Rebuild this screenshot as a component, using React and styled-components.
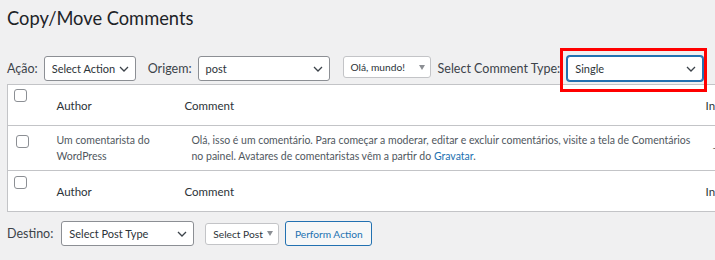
import React from "react";
import styled, { createGlobalStyle, css } from "styled-components";

const GlobalStyle = createGlobalStyle`
  html, body {
    margin: 0;
    padding: 0;
    background: #f0f0f1;
    overflow: hidden;
  }
  body {
    font-family: Lato, "Open Sans", sans-serif;
    color: #3c434a;
  }
`;

const Page = styled.div`
  width: 900px;
  padding: 0 0 20px 7px;
`;

const Title = styled.h1`
  margin: 0;
  padding-top: 5px;
  font-size: 18.3px;
  line-height: 26px;
  font-weight: 400;
  color: #1d2327;
`;

const Toolbar = styled.div`
  display: flex;
  align-items: center;
  height: 25px;
  margin-top: ${(p) => p.$top}px;
`;

const Label = styled.span`
  font-size: 12.5px;
  color: #3c434a;
  margin-left: ${(p) => p.$left || 0}px;
  margin-right: ${(p) => (p.$right === undefined ? 6 : p.$right)}px;
  white-space: nowrap;
`;

const SelectBox = styled.div`
  position: relative;
  box-sizing: border-box;
  display: flex;
  align-items: center;
  justify-content: space-between;
  flex-shrink: 0;
  width: ${(p) => p.$width}px;
  height: 25px;
  margin-left: ${(p) => p.$left || 0}px;
  padding: 0 6px 0 7px;
  background: #fff;
  border: 1px solid #8c8f94;
  border-radius: 3px;
  font-size: 11px;
  color: #2c3338;
  white-space: nowrap;
  ${(p) =>
    p.$focused &&
    css`
      border-color: #2271b1;
      box-shadow: 0 0 0 1px #2271b1;
    `}
`;

const Highlight = styled.div`
  position: relative;
  flex-shrink: 0;
  &::after {
    content: "";
    position: absolute;
    left: -7px;
    top: -8px;
    right: -4px;
    bottom: -11px;
    border: 3px solid #f00;
    pointer-events: none;
    z-index: 2;
  }
`;

const SmallSelect = styled.div`
  box-sizing: border-box;
  display: flex;
  align-items: center;
  justify-content: space-between;
  flex-shrink: 0;
  width: ${(p) => p.$width}px;
  height: 22px;
  margin-left: ${(p) => p.$left || 0}px;
  align-self: ${(p) => (p.$top ? "flex-start" : "center")};
  padding: 0 5px 0 7px;
  background: #fff;
  border: 1px solid #c3c4c7;
  border-radius: 3px;
  font-size: 10.2px;
  color: #2c3338;
  white-space: nowrap;
`;

const Triangle = styled.span`
  width: 0;
  height: 0;
  border-left: 3.5px solid transparent;
  border-right: 3.5px solid transparent;
  border-top: 5px solid #8c8f94;
`;

const Button = styled.button`
  box-sizing: border-box;
  flex-shrink: 0;
  height: 25px;
  width: 87px;
  margin-left: ${(p) => p.$left || 0}px;
  padding: 0;
  background: #f6f7f7;
  border: 1px solid #2271b1;
  border-radius: 3px;
  color: #2271b1;
  font-family: inherit;
  font-size: 10.2px;
  white-space: nowrap;
`;

const Chevron = () => (
  <svg width="10" height="6" viewBox="0 0 10 6" aria-hidden="true">
    <polyline
      points="1,1 5,5 9,1"
      fill="none"
      stroke="#3c434a"
      strokeWidth="1.3"
    />
  </svg>
);

const Table = styled.table`
  margin-top: 3px;
  width: 860px;
  table-layout: fixed;
  border-collapse: collapse;
  background: #fff;
  border: 1px solid #c3c4c7;
`;

const Row = styled.tr`
  height: ${(p) => p.$height}px;
  border-bottom: 1px solid #c3c4c7;
`;

const HeadCell = styled.th`
  text-align: left;
  font-weight: 400;
  font-size: 11.5px;
  color: #2c3338;
  padding: 0 8px;
  vertical-align: middle;
  white-space: nowrap;
`;

const CheckCell = styled.td`
  vertical-align: top;
  padding: ${(p) => p.$top}px 0 0 ${(p) => p.$left}px;
`;

const Cell = styled.td`
  vertical-align: middle;
  font-size: 10.5px;
  line-height: 16px;
  color: #50575e;
  padding: 6px ${(p) => (p.$right === undefined ? 8 : p.$right)}px 6px
    ${(p) => p.$left || 8}px;
`;

const Checkbox = styled.span`
  display: block;
  box-sizing: border-box;
  width: 13px;
  height: 13px;
  border: 1px solid #8c8f94;
  border-radius: 3px;
  background: #fff;
`;

const Link = styled.a`
  color: #2271b1;
  text-decoration: none;
`;

export default function App() {
  return (
    <>
      <GlobalStyle />
      <Page>
        <Title>Copy/Move Comments</Title>
        <Toolbar $top={25}>
          <Label>Ação:</Label>
          <SelectBox $width={92}>
            Select Action <Chevron />
          </SelectBox>
          <Label $left={12}>Origem:</Label>
          <SelectBox $width={132}>
            post <Chevron />
          </SelectBox>
          <SmallSelect $width={88} $left={13} $top>
            Olá, mundo! <Triangle />
          </SmallSelect>
          <Label $left={7} $right={7}>
            Select Comment Type:
          </Label>
          <Highlight>
            <SelectBox $width={136} $focused>
              Single <Chevron />
            </SelectBox>
          </Highlight>
        </Toolbar>

        <Table>
          <colgroup>
            <col style={{ width: 41 }} />
            <col style={{ width: 128 }} />
            <col style={{ width: 521 }} />
            <col style={{ width: 170 }} />
          </colgroup>
          <thead>
            <Row $height={41}>
              <CheckCell $top={4} $left={6}>
                <Checkbox />
              </CheckCell>
              <HeadCell>Author</HeadCell>
              <HeadCell>Comment</HeadCell>
              <HeadCell>In Response To</HeadCell>
            </Row>
          </thead>
          <tbody>
            <Row $height={45}>
              <CheckCell $top={9} $left={8}>
                <Checkbox />
              </CheckCell>
              <Cell>Um comentarista do WordPress</Cell>
              <Cell $left={15} $right={2}>
                Olá, isso é um comentário. Para começar a moderar, editar e
                excluir comentários, visite a tela de Comentários no painel.
                Avatares de comentaristas vêm a partir do{" "}
                <Link href="#">Gravatar</Link>.
              </Cell>
              <Cell $left={15}>—</Cell>
            </Row>
          </tbody>
          <tfoot>
            <Row $height={41}>
              <CheckCell $top={5} $left={6}>
                <Checkbox />
              </CheckCell>
              <HeadCell>Author</HeadCell>
              <HeadCell>Comment</HeadCell>
              <HeadCell>In Response To</HeadCell>
            </Row>
          </tfoot>
        </Table>

        <Toolbar $top={9}>
          <Label $right={8}>Destino:</Label>
          <SelectBox $width={133}>
            Select Post Type <Chevron />
          </SelectBox>
          <SmallSelect $width={74} $left={11}>
            Select Post <Triangle />
          </SmallSelect>
          <Button $left={6}>Perform Action</Button>
        </Toolbar>
      </Page>
    </>
  );
}
